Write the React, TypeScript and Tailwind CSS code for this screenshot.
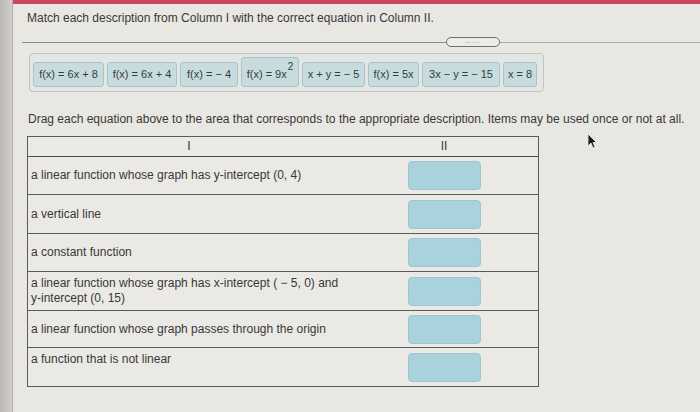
import React from "react";

const tiles: { w: number; h: number; content: React.ReactNode }[] = [
  { w: 71, h: 25, content: <>f(x) = 6x + 8</> },
  { w: 70, h: 25, content: <>f(x) = 6x + 4</> },
  { w: 58, h: 25, content: <>f(x) = − 4</> },
  {
    w: 58,
    h: 30,
    content: (
      <>
        f(x) = 9x<span className="inline-block align-top text-[10px] leading-[10px] relative -top-[6px] ml-[1px]">2</span>
      </>
    ),
  },
  { w: 63, h: 25, content: <>x + y = − 5</> },
  { w: 51, h: 25, content: <>f(x) = 5x</> },
  { w: 78, h: 25, content: <>3x − y = − 15</> },
  { w: 34, h: 25, content: <>x = 8</> },
];

const rows: { h: number; align: string; text: React.ReactNode }[] = [
  { h: 38, align: "items-center", text: "a linear function whose graph has y-intercept (0, 4)" },
  { h: 39, align: "items-center", text: "a vertical line" },
  { h: 38, align: "items-center", text: "a constant function" },
  {
    h: 39,
    align: "items-center",
    text: (
      <>
        a linear function whose graph has x-intercept ( − 5, 0) and
        <br />
        y-intercept (0, 15)
      </>
    ),
  },
  { h: 37, align: "items-center", text: "a linear function whose graph passes through the origin" },
  { h: 38, align: "items-start pt-[4px]", text: "a function that is not linear" },
];

export default function App() {
  return (
    <div className="relative w-[700px] h-[412px] overflow-hidden flex bg-[#e9e7e2] text-[#383838] font-['Liberation_Sans',Arial,sans-serif]">
      <div className="w-[13px] shrink-0 bg-gradient-to-r from-[#bcb8b5] to-[#d2cfcb] border-r border-[#b3afac]" />
      <div className="flex-1 flex flex-col">
        <div className="h-[4px] bg-[#c8475b]" />
        <div className="pl-[14px] pt-[7px] h-[29px] text-[12px] leading-[14px]">
          Match each description from Column I with the correct equation in Column II.
        </div>
        <div className="flex items-center h-[10px] pl-[9px] mt-[4px]">
          <div className="w-[424px] h-px bg-[#8a8a88]" />
          <div className="w-[54px] h-[10px] rounded-full border border-[#707070] bg-[#ecebe7] flex items-center justify-center text-[7px] leading-none tracking-[1px] text-[#777] pb-[3px]">
            .....
          </div>
          <div className="flex-1 h-px bg-[#a9a9a7]" />
        </div>
        <div className="pl-[16px] mt-[6px]">
          <div className="w-[515px] h-[39px] rounded-[4px] border border-[#c0c5c3] bg-[#e3e6e2] flex items-end gap-[3px] px-[3px] pb-[4px]">
            {tiles.map((t, i) => (
              <div
                key={i}
                style={{ width: t.w, height: t.h }}
                className="shrink-0 rounded-[3px] border border-[#a9c4c8] bg-[#c6dcdf] flex items-end justify-center pb-[5px] text-[11px] leading-[13px] whitespace-nowrap text-[#3a3a3a]"
              >
                <span>{t.content}</span>
              </div>
            ))}
          </div>
        </div>
        <div className="pl-[15px] mt-[20px] h-[24px] text-[12px] leading-[14px]">
          Drag each equation above to the area that corresponds to the appropriate description. Items may be used once or not at all.
        </div>
        <div className="ml-[14px] w-[512px] border border-[#5a5a5a] bg-[#ebe9e5] text-[12px] leading-[15px]">
          <div className="flex h-[20px] border-b border-[#4a4a4a] items-center">
            <div className="w-[322px] text-center">I</div>
            <div className="flex-1 text-center">II</div>
          </div>
          {rows.map((r, i) => (
            <div
              key={i}
              style={{ height: r.h }}
              className={`flex ${i < rows.length - 1 ? "border-b border-[#5a5a5a]" : ""}`}
            >
              <div className={`w-[322px] flex ${r.align} pl-[3px]`}>
                <div>{r.text}</div>
              </div>
              <div className="flex-1 flex items-center justify-center">
                <div className="w-[73px] h-[29px] rounded-[4px] border border-[#9cc6d0] bg-[#a9d2dc]" />
              </div>
            </div>
          ))}
        </div>
      </div>
      <svg
        className="absolute left-[587px] top-[133px]"
        width="10"
        height="16"
        viewBox="0 0 10 16"
      >
        <path d="M1 1 L1 13 L4 10 L6 15 L8 14 L6 9.5 L9.5 9.5 Z" fill="#1a1a1a" stroke="#f0f0f0" strokeWidth="0.8" />
      </svg>
    </div>
  );
}
